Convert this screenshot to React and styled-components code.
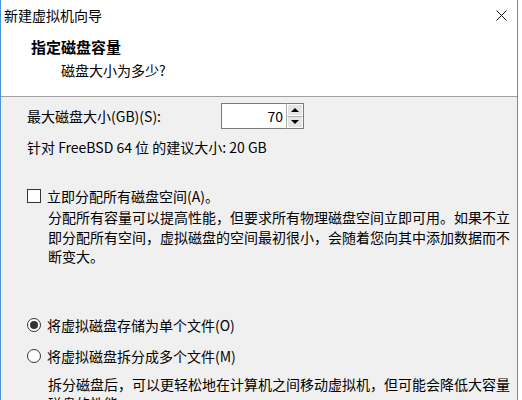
import React from "react";
import styled, { createGlobalStyle } from "styled-components";

const GlobalStyle = createGlobalStyle`
  html, body {
    margin: 0;
    padding: 0;
    background: #ffffff;
  }
  body {
    font-family: "Noto Sans CJK SC", "Noto Sans", sans-serif;
    font-size: 14px;
    color: #000;
  }
`;

const Window = styled.div`
  width: 516px;
  height: 400px;
  border-left: 1px solid #4a94d8;
  border-right: 1px solid #4a94d8;
  display: flex;
  flex-direction: column;
  overflow: hidden;
`;

const TitleBar = styled.div`
  flex-shrink: 0;
  height: 30px;
  display: flex;
  align-items: center;
  justify-content: space-between;
  padding-left: 3px;
  background: #fff;
`;

const TitleText = styled.span`
  font-size: 14px;
  line-height: 20px;
`;

const Close = styled.div`
  width: 11px;
  height: 11px;
  margin-right: 10px;
  display: flex;
`;

const Header = styled.div`
  flex-shrink: 0;
  background: #fff;
  padding: 6px 0 16px 30px;
  border-bottom: 1px solid #a0a0a0;
`;

const Heading = styled.div`
  font-size: 15px;
  font-weight: bold;
  line-height: 21px;
`;

const SubHeading = styled.div`
  margin-top: 3px;
  margin-left: 30px;
  line-height: 20px;
`;

const Body = styled.div`
  flex: 1 0 auto;
  background: #f0f0f0;
  padding: 6px 0 0 26px;
  display: flex;
  flex-direction: column;
`;

const SizeRow = styled.div`
  display: flex;
  align-items: center;
  height: 26px;
`;

const Label = styled.span`
  width: 194px;
  line-height: 20px;
`;

const Spin = styled.div`
  display: flex;
  height: 26px;
`;

const SpinInput = styled.div`
  width: 61px;
  height: 24px;
  border: 1px solid #7a7a7a;
  border-right: none;
  background: #fff;
  text-align: right;
  line-height: 24px;
  padding-right: 3px;
`;

const SpinButtons = styled.div`
  display: flex;
  flex-direction: column;
  width: 16px;
  border: 1px solid #7a7a7a;
  border-left: 1px solid #adadad;
`;

const SpinBtn = styled.div`
  flex: 1;
  background: #e5e5e5;
  display: flex;
  align-items: center;
  justify-content: center;
  border: 1px solid #fff;
  border-top: ${(p) => (p.$down ? "1px solid #adadad" : "1px solid #fff")};
`;

const Arrow = styled.div`
  width: 0;
  height: 0;
  border-left: 4px solid transparent;
  border-right: 4px solid transparent;
  ${(p) =>
    p.$down ? "border-top: 4px solid #000;" : "border-bottom: 4px solid #000;"}
`;

const Hint = styled.div`
  margin-top: 8px;
  line-height: 20px;
`;

const OptionRow = styled.div`
  display: flex;
  align-items: center;
  gap: 6px;
  line-height: 20px;
  margin-top: ${(p) => p.$top}px;
`;

const CheckBox = styled.span`
  width: 12px;
  height: 12px;
  border: 1px solid #333;
  background: #fff;
  flex-shrink: 0;
`;

const Radio = styled.span`
  width: 12px;
  height: 12px;
  border: 1px solid #333;
  border-radius: 50%;
  background: #fff;
  flex-shrink: 0;
  display: flex;
  align-items: center;
  justify-content: center;
  &::after {
    content: "";
    width: 8px;
    height: 8px;
    border-radius: 50%;
    background: ${(p) => (p.$checked ? "#333" : "transparent")};
  }
`;

const Note = styled.p`
  margin: ${(p) => p.$top}px 0 0 21px;
  width: 462px;
  line-height: 19.5px;
`;

export default function App() {
  return (
    <>
      <GlobalStyle />
      <Window>
        <TitleBar>
          <TitleText>新建虚拟机向导</TitleText>
          <Close>
            <svg width="11" height="11" viewBox="0 0 11 11">
              <path d="M0.5 0.5 L10.5 10.5 M10.5 0.5 L0.5 10.5" stroke="#111" strokeWidth="1" fill="none" />
            </svg>
          </Close>
        </TitleBar>
        <Header>
          <Heading>指定磁盘容量</Heading>
          <SubHeading>磁盘大小为多少?</SubHeading>
        </Header>
        <Body>
          <SizeRow>
            <Label>最大磁盘大小(GB)(S):</Label>
            <Spin>
              <SpinInput>70</SpinInput>
              <SpinButtons>
                <SpinBtn>
                  <Arrow />
                </SpinBtn>
                <SpinBtn $down>
                  <Arrow $down />
                </SpinBtn>
              </SpinButtons>
            </Spin>
          </SizeRow>
          <Hint>针对 FreeBSD 64 位 的建议大小: 20 GB</Hint>
          <OptionRow $top={29}>
            <CheckBox />
            <span>立即分配所有磁盘空间(A)。</span>
          </OptionRow>
          <Note $top={2}>
            分配所有容量可以提高性能，但要求所有物理磁盘空间立即可用。如果不立即分配所有空间，虚拟磁盘的空间最初很小，会随着您向其中添加数据而不断变大。
          </Note>
          <OptionRow $top={48}>
            <Radio $checked />
            <span>将虚拟磁盘存储为单个文件(O)</span>
          </OptionRow>
          <OptionRow $top={11}>
            <Radio />
            <span>将虚拟磁盘拆分成多个文件(M)</span>
          </OptionRow>
          <Note $top={9}>
            拆分磁盘后，可以更轻松地在计算机之间移动虚拟机，但可能会降低大容量磁盘的性能。
          </Note>
        </Body>
      </Window>
    </>
  );
}
